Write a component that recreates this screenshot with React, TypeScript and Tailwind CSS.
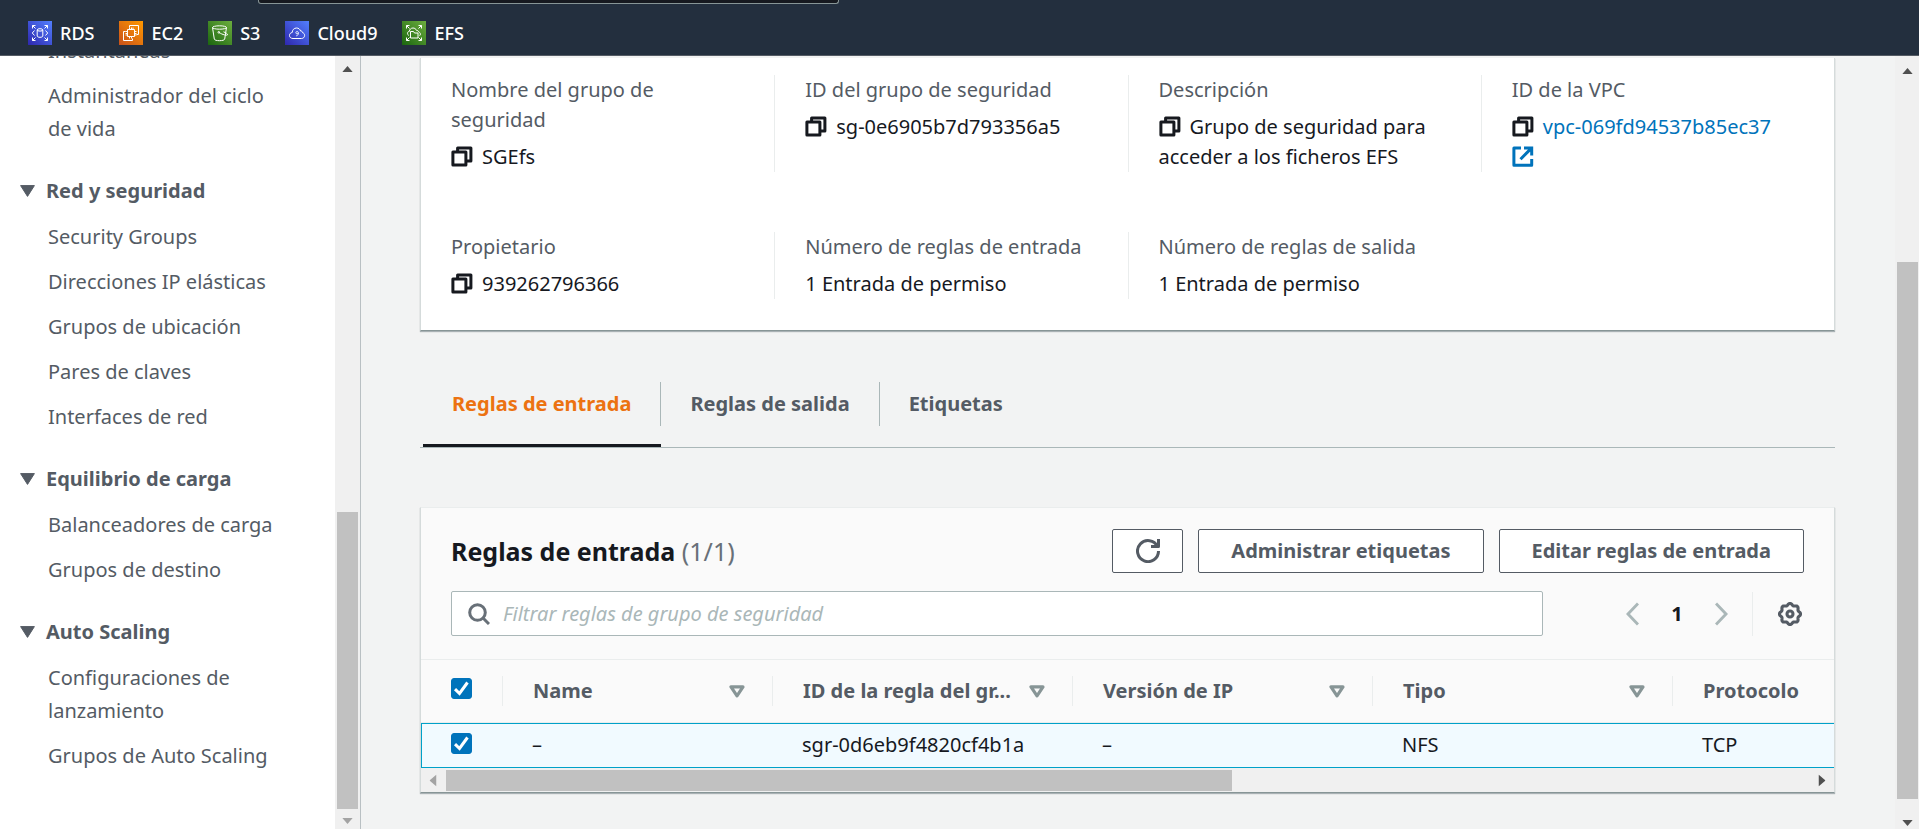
import type { ReactNode } from 'react';

const COPY_LABEL = 'Copiar';

function CopyIcon() {
  return (
    <svg viewBox="0 0 22 22" className="h-[22px] w-[22px]" fill="none" stroke="currentColor" strokeWidth="3" strokeLinejoin="round" aria-hidden="true">
      <path d="M1.9 5.9h13v13.2h-13z" />
      <path d="M6.6 5.5V1.9h13.3v13h-4.3" />
    </svg>
  );
}

function ExternalIcon() {
  return (
    <svg viewBox="0 0 22 22" className="h-[22px] w-[22px]" fill="none" stroke="currentColor" strokeWidth="3" aria-hidden="true">
      <path d="M9 1.9H1.9v17.4h17.8V13" strokeLinejoin="round" />
      <path d="M12 1.9h7.7V9.5M19 2.6L8.5 13.2" />
    </svg>
  );
}

function RefreshIcon() {
  return (
    <svg viewBox="0 0 16 16" className="h-6 w-6" fill="none" stroke="currentColor" strokeWidth="2" aria-hidden="true">
      <path d="M10 5h5V0" strokeLinejoin="round" />
      <path d="M15 8a7 7 0 1 1-.7-3" />
    </svg>
  );
}

const gearPath =
  Array.from({ length: 97 }, (_, i) => {
    const angle = (i / 96) * Math.PI * 2;
    const radius = 9.7 + 0.9 * Math.cos(angle * 8);
    const x = (12 + radius * Math.cos(angle)).toFixed(2);
    const y = (12 + radius * Math.sin(angle)).toFixed(2);
    return `${i === 0 ? 'M' : 'L'}${x} ${y}`;
  }).join('') + 'Z';

function GearIcon() {
  return (
    <svg viewBox="0 0 24 24" className="h-6 w-6" fill="none" stroke="currentColor" strokeWidth="3.1" aria-hidden="true">
      <path d={gearPath} strokeLinejoin="round" />
      <circle cx="12" cy="12" r="3" />
    </svg>
  );
}

function Tile({ id, from, to, children }: { id: string; from: string; to: string; children: ReactNode }) {
  return (
    <svg viewBox="0 0 24 24" className="h-6 w-6" fill="none" stroke="#fff" strokeWidth="1" aria-hidden="true">
      <defs>
        <linearGradient id={id} x1="0" y1="1" x2="1" y2="0">
          <stop offset="0" stopColor={from} />
          <stop offset="1" stopColor={to} />
        </linearGradient>
      </defs>
      <rect width="24" height="24" fill={`url(#${id})`} stroke="none" />
      {children}
    </svg>
  );
}

const corners = (
  <path d="M4.5 7.500V4.500H7.500M4.500 4.500l3 3M16.500 4.500h3v3M19.500 4.500l-3 3M4.500 16.500v3h3M4.500 19.500l3-3M19.500 16.500v3h-3M19.500 19.500l-3-3" />
);

const services = [
  {
    name: 'RDS',
    icon: (
      <Tile id="rds" from="#2E27AD" to="#527FFF">
        {corners}
        <ellipse cx="12" cy="8.900" rx="2.800" ry="1.200" />
        <path d="M9.200 9v6c0 .8 1.200 1.300 2.800 1.300s2.800-.5 2.800-1.300V9" />
        <path d="M6.500 9.500L4.300 12l2.200 2.500M17.500 9.500l2.200 2.500-2.200 2.500" />
      </Tile>
    ),
  },
  {
    name: 'EC2',
    icon: (
      <Tile id="ec2" from="#C8511B" to="#FF9900">
        <path d="M8.500 8.500h7v7h-7z" />
        <path d="M10.500 8.500v-2M12.500 8.500v-2M14 8.500v-2M10.500 15.500v2M12.500 15.500v2M8.500 10.500h-2M8.500 12.500h-2M8.500 14h-2M15.500 10.500h2M15.500 12.500h2M15.500 14h2" />
        <path d="M10.500 6.500v-2h9v9h-2M6.500 10.500h-2v9h9v-2" />
      </Tile>
    ),
  },
  {
    name: 'S3',
    icon: (
      <Tile id="s3" from="#1B660F" to="#6CAE3E">
        <ellipse cx="11.500" cy="6.500" rx="7" ry="1.700" />
        <path d="M4.500 6.500l1.800 11.600c.2 1 2.400 1.600 5.200 1.600s5-.6 5.200-1.600L18.500 6.500" />
        <path d="M11 11.500c3.500 2.200 8 3.300 8.500 2.300.4-.9-1.600-2-4-3" />
        <circle cx="10.800" cy="11.300" r=".8" />
      </Tile>
    ),
  },
  {
    name: 'Cloud9',
    icon: (
      <Tile id="cloud9" from="#2E27AD" to="#527FFF">
        <path d="M8 17.500c-2 0-3.500-1.100-3.500-3s1.300-2.800 2.700-3c0-2.500 1.900-4.500 4.300-4.500 2 0 3.500 1.200 4.100 3 1-.2 1.900.6 2 1.700 1.200.3 2 1.300 2 2.700 0 1.800-1.300 3.100-3.100 3.100z" />
        <path d="M13.400 11.700c0 .7-.6 1.200-1.300 1.200s-1.300-.5-1.300-1.200.6-1.200 1.300-1.200 1.300.5 1.300 1.200c0 1.700-.5 3-2.200 3.200" strokeWidth=".8" />
      </Tile>
    ),
  },
  {
    name: 'EFS',
    icon: (
      <Tile id="efs" from="#1B660F" to="#6CAE3E">
        {corners}
        <path d="M8.500 10.500h3l1 1.500h3.500v5H8.500z" />
        <path d="M6.800 14.500c-.9-.5-1.300-1.200-1.300-2.200 0-1.100.8-1.900 1.900-2 .1-1.900 1.600-3.300 3.600-3.300 1.600 0 2.900.9 3.400 2.300 1.300-.1 2 .6 2.100 1.600 1.200.3 1.900 1.200 1.900 2.200 0 .7-.3 1.200-.8 1.600" />
      </Tile>
    ),
  },
];

const menu = [
  { title: '', items: ['Instantáneas', 'Administrador del ciclo de vida'] },
  {
    title: 'Red y seguridad',
    items: ['Security Groups', 'Direcciones IP elásticas', 'Grupos de ubicación', 'Pares de claves', 'Interfaces de red'],
  },
  { title: 'Equilibrio de carga', items: ['Balanceadores de carga', 'Grupos de destino'] },
  { title: 'Auto Scaling', items: ['Configuraciones de lanzamiento', 'Grupos de Auto Scaling'] },
];

function Caret({ className }: { className: string }) {
  return (
    <svg viewBox="0 0 12 7" className={className} fill="currentColor" aria-hidden="true">
      <path d="M6 0l6 7H0z" />
    </svg>
  );
}

function Detail({ label, first, children }: { label: string; first?: boolean; children: ReactNode }) {
  return (
    <div className={first ? 'pr-11 pl-[30px]' : 'border-l border-[#eaeded] pr-11 pl-[30px]'}>
      <dt className="mb-[7px] text-[#545b64]">{label}</dt>
      <dd className="text-[#16191f]">{children}</dd>
    </div>
  );
}

function CopyButton() {
  return (
    <button type="button" aria-label={COPY_LABEL} className="mr-[9px] inline-block align-[-4px] text-[#16191f]">
      <CopyIcon />
    </button>
  );
}

function Tick({ label }: { label: string }) {
  return (
    <span className="relative block h-[21px] w-[21px]">
      <input type="checkbox" defaultChecked aria-label={label} className="peer block h-[21px] w-[21px] appearance-none rounded-[3px] border border-[#687078] bg-white checked:border-[#0073bb] checked:bg-[#0073bb]" />
      <svg viewBox="0 0 21 21" className="pointer-events-none absolute inset-0 hidden peer-checked:block" fill="none" stroke="#fff" strokeWidth="3" aria-hidden="true">
        <path d="M4 11.200l4.500 4.300L16.500 4.500" />
      </svg>
    </span>
  );
}

const columns = ['Name', 'ID de la regla del gr...', 'Versión de IP', 'Tipo', 'Protocolo'];
const rule = ['–', 'sgr-0d6eb9f4820cf4b1a', '–', 'NFS', 'TCP'];

export default function App() {
  return (
    <div className="flex h-screen flex-col overflow-hidden bg-[#f2f3f3] font-['Noto_Sans',sans-serif] text-[20px] leading-[30px] text-[#16191f]">
      <header className="h-14 shrink-0 border-b border-[#545b64] bg-[#232f3e]">
        <div className="ml-[258px] h-1 w-[581px] rounded-b-[3px] border border-t-0 border-[#879596] bg-[#16191f]" />
        <nav aria-label="Servicios favoritos" className="flex gap-[25px] pt-[14px] pl-7">
          {services.map((s) => (
            <a key={s.name} href={`#${s.name}`} className="flex h-[30px] items-center gap-2 text-[18px] leading-[28px] font-medium text-white">
              {s.icon}
              {s.name}
            </a>
          ))}
        </nav>
      </header>

      <div className="flex min-h-0 flex-1">
        <aside className="flex w-[361px] shrink-0 overflow-hidden border-r border-[#b9c0c3] bg-white">
          <nav aria-label="EC2" className="-mt-[22px] min-w-0 flex-1 pr-12 pl-5 text-[#545b64]">
            {menu.map((group) => (
              <section key={group.title}>
                {group.title && (
                  <h2 className="mt-[29px] mb-[13px] flex h-[33px] items-center gap-[11px] font-bold">
                    <svg viewBox="0 0 15 12" className="h-3 w-[15px]" fill="currentColor" stroke="currentColor" strokeWidth="1" strokeLinejoin="round" aria-hidden="true">
                      <path d="M.6.6h13.800L7.500 11.400z" />
                    </svg>
                    {group.title}
                  </h2>
                )}
                <ul className="flex flex-col gap-3 pl-7 leading-[33px]">
                  {group.items.map((item) => (
                    <li key={item}>
                      <a href="#menu">{item}</a>
                    </li>
                  ))}
                </ul>
              </section>
            ))}
          </nav>
          <div className="flex w-[25px] shrink-0 flex-col items-center bg-[#f0f0f0]" aria-hidden="true">
            <Caret className="mt-[10px] h-[6px] w-[11px] text-[#505050]" />
            <div className="flex-1" />
            <div className="h-[297px] w-[21px] bg-[#c1c1c1]" />
            <Caret className="mt-[9px] mb-[5px] h-[6px] w-[11px] rotate-180 text-[#a3a3a3]" />
          </div>
        </aside>

        <main className="min-w-0 flex-1 pt-[2px] pr-[60px] pl-[59px]">
          <dl className="grid grid-cols-4 gap-y-[60px] border border-t-0 border-[#d5dbdb] border-b-[#879596] bg-white pt-[17px] pb-[31px] shadow-[0_1px_1px_0_rgba(0,28,36,0.3)]">
            <Detail label="Nombre del grupo de seguridad" first>
              <CopyButton />
              SGEfs
            </Detail>
            <Detail label="ID del grupo de seguridad">
              <CopyButton />
              sg-0e6905b7d793356a5
            </Detail>
            <Detail label="Descripción">
              <CopyButton />
              Grupo de seguridad para acceder a los ficheros EFS
            </Detail>
            <Detail label="ID de la VPC">
              <CopyButton />
              <a href="#vpc" className="text-[#0073bb]">
                vpc-069fd94537b85ec37{' '}
                <span className="inline-block align-[-4px]">
                  <ExternalIcon />
                </span>
              </a>
            </Detail>
            <Detail label="Propietario" first>
              <CopyButton />
              939262796366
            </Detail>
            <Detail label="Número de reglas de entrada">1 Entrada de permiso</Detail>
            <Detail label="Número de reglas de salida">1 Entrada de permiso</Detail>
          </dl>

          <div role="tablist" className="mt-[51px] flex border-b border-[#aab7b8] pl-[3px] font-bold text-[#545b64]">
            <button type="button" role="tab" aria-selected="true" className="border-b-[3px] border-[#16191f] pb-[18px] text-[#ec7211]">
              <span className="block border-r border-[#aab7b8] px-[29px] py-[7px]">Reglas de entrada</span>
            </button>
            <button type="button" role="tab" aria-selected="false" className="pb-[21px]">
              <span className="block border-r border-[#aab7b8] px-[29px] py-[7px]">Reglas de salida</span>
            </button>
            <button type="button" role="tab" aria-selected="false" className="pb-[21px]">
              <span className="block px-[29px] py-[7px]">Etiquetas</span>
            </button>
          </div>

          <section className="mt-[59px] border border-[#d5dbdb] border-t-[#eaeded] border-b-[#879596] bg-[#fafafa] shadow-[0_1px_1px_0_rgba(0,28,36,0.3)]">
            <div className="flex items-center px-[30px] pt-[21px]">
              <h1 className="flex-1 text-[25px] font-bold">
                Reglas de entrada <span className="font-normal text-[#687078]">(1/1)</span>
              </h1>
              <div className="flex gap-[15px] font-bold text-[#545b64]">
                <button type="button" aria-label="Actualizar" className="flex h-11 w-[71px] items-center justify-center rounded-[2px] border border-[#545b64] bg-white">
                  <RefreshIcon />
                </button>
                <button type="button" className="h-11 rounded-[2px] border border-[#545b64] bg-white px-8">
                  Administrar etiquetas
                </button>
                <button type="button" className="h-11 rounded-[2px] border border-[#545b64] bg-white px-8">
                  Editar reglas de entrada
                </button>
              </div>
            </div>

            <div className="flex items-center pt-[18px] pr-8 pb-[23px] pl-[30px]">
              <label className="flex h-[45px] flex-1 items-center gap-[13px] rounded-[2px] border border-[#aab7b8] bg-white px-4">
                <svg viewBox="0 0 22 22" className="h-[22px] w-[22px] shrink-0" fill="none" stroke="#687078" strokeWidth="3" aria-hidden="true">
                  <circle cx="9.500" cy="9.500" r="7.800" />
                  <path d="M15 15l6 6" />
                </svg>
                <input type="search" aria-label="Filtrar reglas de grupo de seguridad" placeholder="Filtrar reglas de grupo de seguridad" className="min-w-0 flex-1 bg-transparent outline-none placeholder:text-[#aab7b8] placeholder:italic" />
              </label>
              <div className="ml-[83px] flex items-center">
                <button type="button" aria-label="Página anterior" className="text-[#aab7b8]">
                  <svg viewBox="0 0 13 24" className="h-6 w-[13px]" fill="none" stroke="currentColor" strokeWidth="2.900" aria-hidden="true">
                    <path d="M12 1.500L2 12l10 10.500" />
                  </svg>
                </button>
                <span className="w-[76px] text-center text-[20px] font-bold">1</span>
                <button type="button" aria-label="Página siguiente" className="text-[#aab7b8]">
                  <svg viewBox="0 0 13 24" className="h-6 w-[13px]" fill="none" stroke="currentColor" strokeWidth="2.900" aria-hidden="true">
                    <path d="M1 1.500L11 12 1 22.500" />
                  </svg>
                </button>
                <span className="ml-6 h-11 border-l border-[#eaeded]" />
                <button type="button" aria-label="Preferencias" className="ml-[25px] text-[#545b64]">
                  <GearIcon />
                </button>
              </div>
            </div>

            <table className="w-full table-fixed border-separate border-spacing-0 border-t border-[#eaeded] text-left">
              <colgroup>
                <col className="w-[81px]" />
                <col className="w-[270px]" />
                <col className="w-[300px]" />
                <col className="w-[300px]" />
                <col className="w-[300px]" />
                <col />
              </colgroup>
              <thead className="text-[#545b64]">
                <tr>
                  <th className="border-b border-[#eaeded] pt-[18px] pl-[30px] align-top">
                    <Tick label="Seleccionar todas las reglas" />
                  </th>
                  {columns.map((name, i) => (
                    <th key={name} className="border-b border-[#eaeded] pt-4 pb-4 font-bold">
                      <span className="flex items-center gap-2 border-l border-[#eaeded] pr-[27px] pl-[30px]">
                        <span className="flex-1 whitespace-nowrap">{name}</span>
                        {i < columns.length - 1 && (
                          <svg viewBox="0 0 16 13" className="h-[13px] w-4 shrink-0" fill="none" stroke="#879596" strokeWidth="3.200" strokeLinejoin="round" aria-hidden="true">
                            <path d="M2 1.900h12L8 10.800z" />
                          </svg>
                        )}
                      </span>
                    </th>
                  ))}
                </tr>
              </thead>
              <tbody>
                <tr className="bg-[#f1faff]">
                  <td className="border-y border-l border-[#00a1c9] pt-[9px] pl-[29px] align-top">
                    <Tick label="Seleccionar regla sgr-0d6eb9f4820cf4b1a" />
                  </td>
                  {rule.map((value, i) => (
                    <td key={columns[i]} className="border-y border-[#00a1c9] pt-[6px] pb-[7px] pl-[30px] whitespace-nowrap">
                      {value}
                    </td>
                  ))}
                </tr>
              </tbody>
            </table>

            <div className="flex h-6 items-center bg-[#f0f0f0]" aria-hidden="true">
              <Caret className="mr-[7px] ml-[6px] h-[7px] w-3 -rotate-90 text-[#a3a3a3]" />
              <div className="h-[21px] w-[786px] bg-[#c1c1c1]" />
              <div className="flex-1" />
              <Caret className="mr-[6px] h-[7px] w-3 rotate-90 text-[#505050]" />
            </div>
          </section>
        </main>

        <div className="flex w-6 shrink-0 flex-col items-center bg-[#f0f0f0]" aria-hidden="true">
          <Caret className="mt-3 h-[6px] w-[11px] text-[#505050]" />
          <div className="flex-1" />
          <div className="h-[537px] w-[21px] bg-[#c1c1c1]" />
          <Caret className="mt-[21px] mb-[3px] h-[6px] w-[11px] rotate-180 text-[#505050]" />
        </div>
      </div>
    </div>
  );
}
